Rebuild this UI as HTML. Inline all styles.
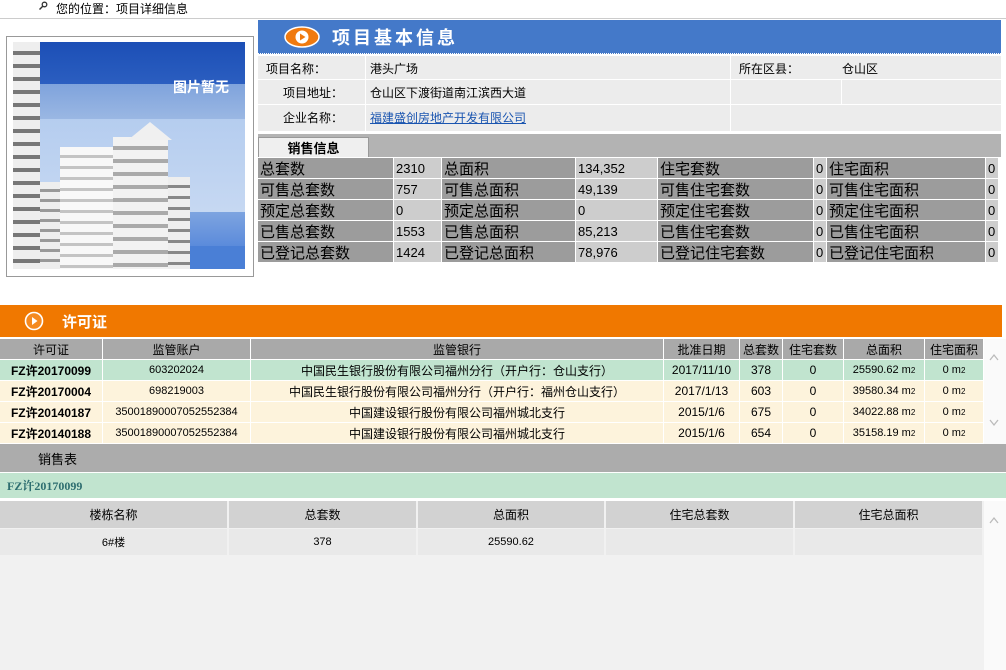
<!DOCTYPE html>
<html><head><meta charset="utf-8">
<style>
*{margin:0;padding:0;box-sizing:border-box}
body{width:1006px;height:670px;overflow:hidden;background:#fff;font-family:"Liberation Sans","Noto Sans CJK SC",sans-serif;font-size:12px;color:#000;position:relative}
.a{position:absolute}
.c{position:absolute;display:flex;align-items:center;overflow:hidden;white-space:nowrap}
.ctr{justify-content:center}
.big{font-size:15px}
.b{font-weight:bold}
.bld{position:absolute;background:repeating-linear-gradient(#f8f8f8 0 8px,#c4c4c4 8px 11px)}
</style></head><body>
<div class="a" style="left:0;top:18px;width:1006px;height:1px;background:#ccc"></div>
<svg class="a" style="left:38px;top:1px" width="10" height="10" viewBox="0 0 10 10"><circle cx="6.5" cy="3.5" r="2.3" fill="none" stroke="#333" stroke-width="1.3"/><path d="M5 5 L1.5 8.5" stroke="#333" stroke-width="1.4"/></svg>
<div class="c" style="left:56px;top:0;height:16px">您的位置：项目详细信息</div>

<!-- image box -->
<div class="a" style="left:6px;top:36px;width:248px;height:241px;border:1px solid #999;background:#fff"></div>
<div class="a" style="left:13px;top:42px;width:232px;height:227px;overflow:hidden;background:linear-gradient(#1c4fb6 0,#2b5ec0 42px,#7fa3dc 42px,#9ab7e3 77px,#b5cdef 77px,#c6d8f2 170px,#7ea4e0 170px,#5b8bdb 204px,#4a7fd6 204px,#4a7fd6 227px)">
 <div class="bld" style="left:0;top:0;width:27px;height:227px;background:repeating-linear-gradient(#eee 0 9px,#777 9px 13px)"></div>
 <div class="bld" style="left:27px;top:140px;width:20px;height:87px;background:repeating-linear-gradient(#eee 0 7px,#999 7px 10px)"></div>
 <div class="bld" style="left:47px;top:105px;width:53px;height:122px"></div>
 <div class="bld" style="left:100px;top:95px;width:55px;height:132px;background:repeating-linear-gradient(#f2f2f2 0 9px,#aaa 9px 13px)"></div>
 <div class="a" style="left:115px;top:80px;width:0;height:0;border-left:22px solid transparent;border-right:22px solid transparent;border-bottom:18px solid #f0f0f0"></div>
 <div class="bld" style="left:155px;top:135px;width:22px;height:92px;background:repeating-linear-gradient(#eee 0 8px,#888 8px 11px)"></div>
 <div class="a" style="left:160px;top:35px;color:#fff;font-size:14px;font-weight:bold">图片暂无</div>
</div>

<!-- blue header -->
<div class="a" style="left:258px;top:20px;width:743px;height:34px;background:#4479c9;border-bottom:1px dotted #fff"></div>
<svg class="a" style="left:284px;top:26px" width="36" height="22" viewBox="0 0 36 22"><ellipse cx="18" cy="11" rx="17" ry="10" fill="#f07a10" stroke="#fff" stroke-width="1.5"/><circle cx="18" cy="11" r="6.5" fill="#fff"/><path d="M16 7.5 L21.5 11 L16 14.5Z" fill="#f07a10"/></svg>
<div class="c" style="left:332px;top:22px;height:30px;color:#fff;font-size:18px;font-weight:bold;letter-spacing:3px">项目基本信息</div>

<!-- info rows -->
<div class="a" style="left:258px;top:56px;width:743px;height:75px;background:#ececec"></div>
<div class="a" style="left:258px;top:79px;width:743px;height:1px;background:#fff"></div>
<div class="a" style="left:258px;top:104px;width:743px;height:1px;background:#fff"></div>
<div class="a" style="left:365px;top:56px;width:1px;height:75px;background:#fff"></div>
<div class="a" style="left:730px;top:56px;width:1px;height:75px;background:#fff"></div>
<div class="a" style="left:841px;top:79px;width:1px;height:25px;background:#fff"></div>
<div class="c" style="left:266px;top:57px;height:22px">项目名称：</div>
<div class="c" style="left:370px;top:57px;height:22px">港头广场</div>
<div class="c" style="left:739px;top:57px;height:22px">所在区县：</div>
<div class="c" style="left:842px;top:57px;height:22px">仓山区</div>
<div class="c" style="left:283px;top:80px;height:24px">项目地址：</div>
<div class="c" style="left:370px;top:80px;height:24px">仓山区下渡街道南江滨西大道</div>
<div class="c" style="left:283px;top:105px;height:25px">企业名称：</div>
<div class="c" style="left:370px;top:105px;height:25px;color:#1a55b0;text-decoration:underline">福建盛创房地产开发有限公司</div>

<!-- tab bar -->
<div class="a" style="left:258px;top:134px;width:743px;height:23px;background:#b3b3b3"></div>
<div class="c ctr b" style="left:258px;top:137px;width:111px;height:20px;background:#efefef;border:1px solid #999;border-bottom:none;font-size:13px">销售信息</div>

<div id="st"></div>

<!-- orange bar -->
<div class="a" style="left:0;top:305px;width:1002px;height:32px;background:#f07800"></div>
<svg class="a" style="left:22px;top:311px" width="24" height="20" viewBox="0 0 24 20"><circle cx="12" cy="10" r="8.5" fill="#f58a20" stroke="#fff" stroke-width="1.6"/><path d="M10 6 L15.5 10 L10 14Z" fill="#fff"/></svg>
<div class="c b" style="left:62px;top:305px;height:32px;color:#fff;font-size:15px">许可证</div>

<div id="pt"></div>

<div class="a" style="left:0;top:444px;width:1006px;height:28px;background:#acacac"></div>
<div class="c" style="left:38px;top:444px;height:28px;font-size:13px">销售表</div>
<div class="a" style="left:0;top:473px;width:1006px;height:25px;background:#c1e4cf"></div>
<div class="c b" style="left:7px;top:473px;height:25px;color:#2e6e70;font-family:'Liberation Serif','Noto Serif CJK SC',serif">FZ许20170099</div>

<div class="a" style="left:0;top:501px;width:984px;height:169px;background:#f1f1f1"></div>
<div class="a" style="left:984px;top:501px;width:22px;height:169px;background:#fafafa"></div>
<div id="bt"></div>

<script>
function cell(l,t,w,h,txt,bg,cls,sty){return '<div class="c '+(cls||'')+'" style="left:'+l+'px;top:'+t+'px;width:'+w+'px;height:'+h+'px;background:'+bg+';'+(sty||'')+'">'+txt+'</div>';}
var s='';
var rows=[["总套数","2310","总面积","134,352","住宅套数","0","住宅面积","0"],["可售总套数","757","可售总面积","49,139","可售住宅套数","0","可售住宅面积","0"],["预定总套数","0","预定总面积","0","预定住宅套数","0","预定住宅面积","0"],["已售总套数","1553","已售总面积","85,213","已售住宅套数","0","已售住宅面积","0"],["已登记总套数","1424","已登记总面积","78,976","已登记住宅套数","0","已登记住宅面积","0"]];
var cx=[258,394,442,576,658,814,827,986,999];
rows.forEach(function(r,i){var t=158+i*21;for(var j=0;j<8;j++){s+=cell(cx[j],t,cx[j+1]-cx[j]-1,20,r[j],j%2?'#cdcdcd':'#9c9c9c',j%2?'':'big','padding-left:2px;'+(j%2?'font-size:13px':''));}});
document.getElementById('st').innerHTML=s;

var p='';var px=[0,103,251,664,740,783,844,925,984];
var hd=["许可证","监管账户","监管银行","批准日期","总套数","住宅套数","总面积","住宅面积"];
for(var j=0;j<8;j++)p+=cell(px[j],339,px[j+1]-px[j]-1,20,hd[j],'#a9a9a9','ctr');
var sq='<span style="font-size:8px;vertical-align:5px">2</span>';
var pr=[["FZ许20170099","603202024","中国民生银行股份有限公司福州分行（开户行：仓山支行）","2017/11/10","378","0","25590.62 m"+sq,"0 m"+sq],["FZ许20170004","698219003","中国民生银行股份有限公司福州分行（开户行：福州仓山支行）","2017/1/13","603","0","39580.34 m"+sq,"0 m"+sq],["FZ许20140187","35001890007052552384","中国建设银行股份有限公司福州城北支行","2015/1/6","675","0","34022.88 m"+sq,"0 m"+sq],["FZ许20140188","35001890007052552384","中国建设银行股份有限公司福州城北支行","2015/1/6","654","0","35158.19 m"+sq,"0 m"+sq]];
pr.forEach(function(r,i){var t=360+i*21;var bg=i==0?'#c1e4cf':'#fdf3dc';for(var j=0;j<8;j++){p+=cell(px[j],t,px[j+1]-px[j]-1,20,r[j],bg,'ctr'+(j==0?' b':''),(j==0?'font-family:"Liberation Serif","Noto Serif CJK SC",serif;':'')+(j==1||j>=6?'font-size:11px':''));}});
p+='<div class="a" style="left:984px;top:339px;width:22px;height:105px;background:#fafafa"></div>';
p+='<svg class="a" style="left:988px;top:352px" width="12" height="80"><path d="M2 8 L6 3 L10 8" fill="none" stroke="#bbb" stroke-width="1.3"/><path d="M2 68 L6 73 L10 68" fill="none" stroke="#bbb" stroke-width="1.3"/></svg>';
document.getElementById('pt').innerHTML=p;

var b='';var bx=[0,229,418,606,795,984];var bh=["楼栋名称","总套数","总面积","住宅总套数","住宅总面积"];var bv=["6#楼","378","25590.62","",""];
for(var j=0;j<5;j++){b+=cell(bx[j],501,bx[j+1]-bx[j]-2,27,bh[j],'#d2d2d2','ctr');b+=cell(bx[j],529,bx[j+1]-bx[j]-2,26,bv[j],'#e9e9e9','ctr','font-size:11px');}
b+='<svg class="a" style="left:988px;top:515px" width="12" height="12"><path d="M2 8 L6 3 L10 8" fill="none" stroke="#bbb" stroke-width="1.3"/></svg>';
document.getElementById('bt').innerHTML=b;
</script>
</body></html>
